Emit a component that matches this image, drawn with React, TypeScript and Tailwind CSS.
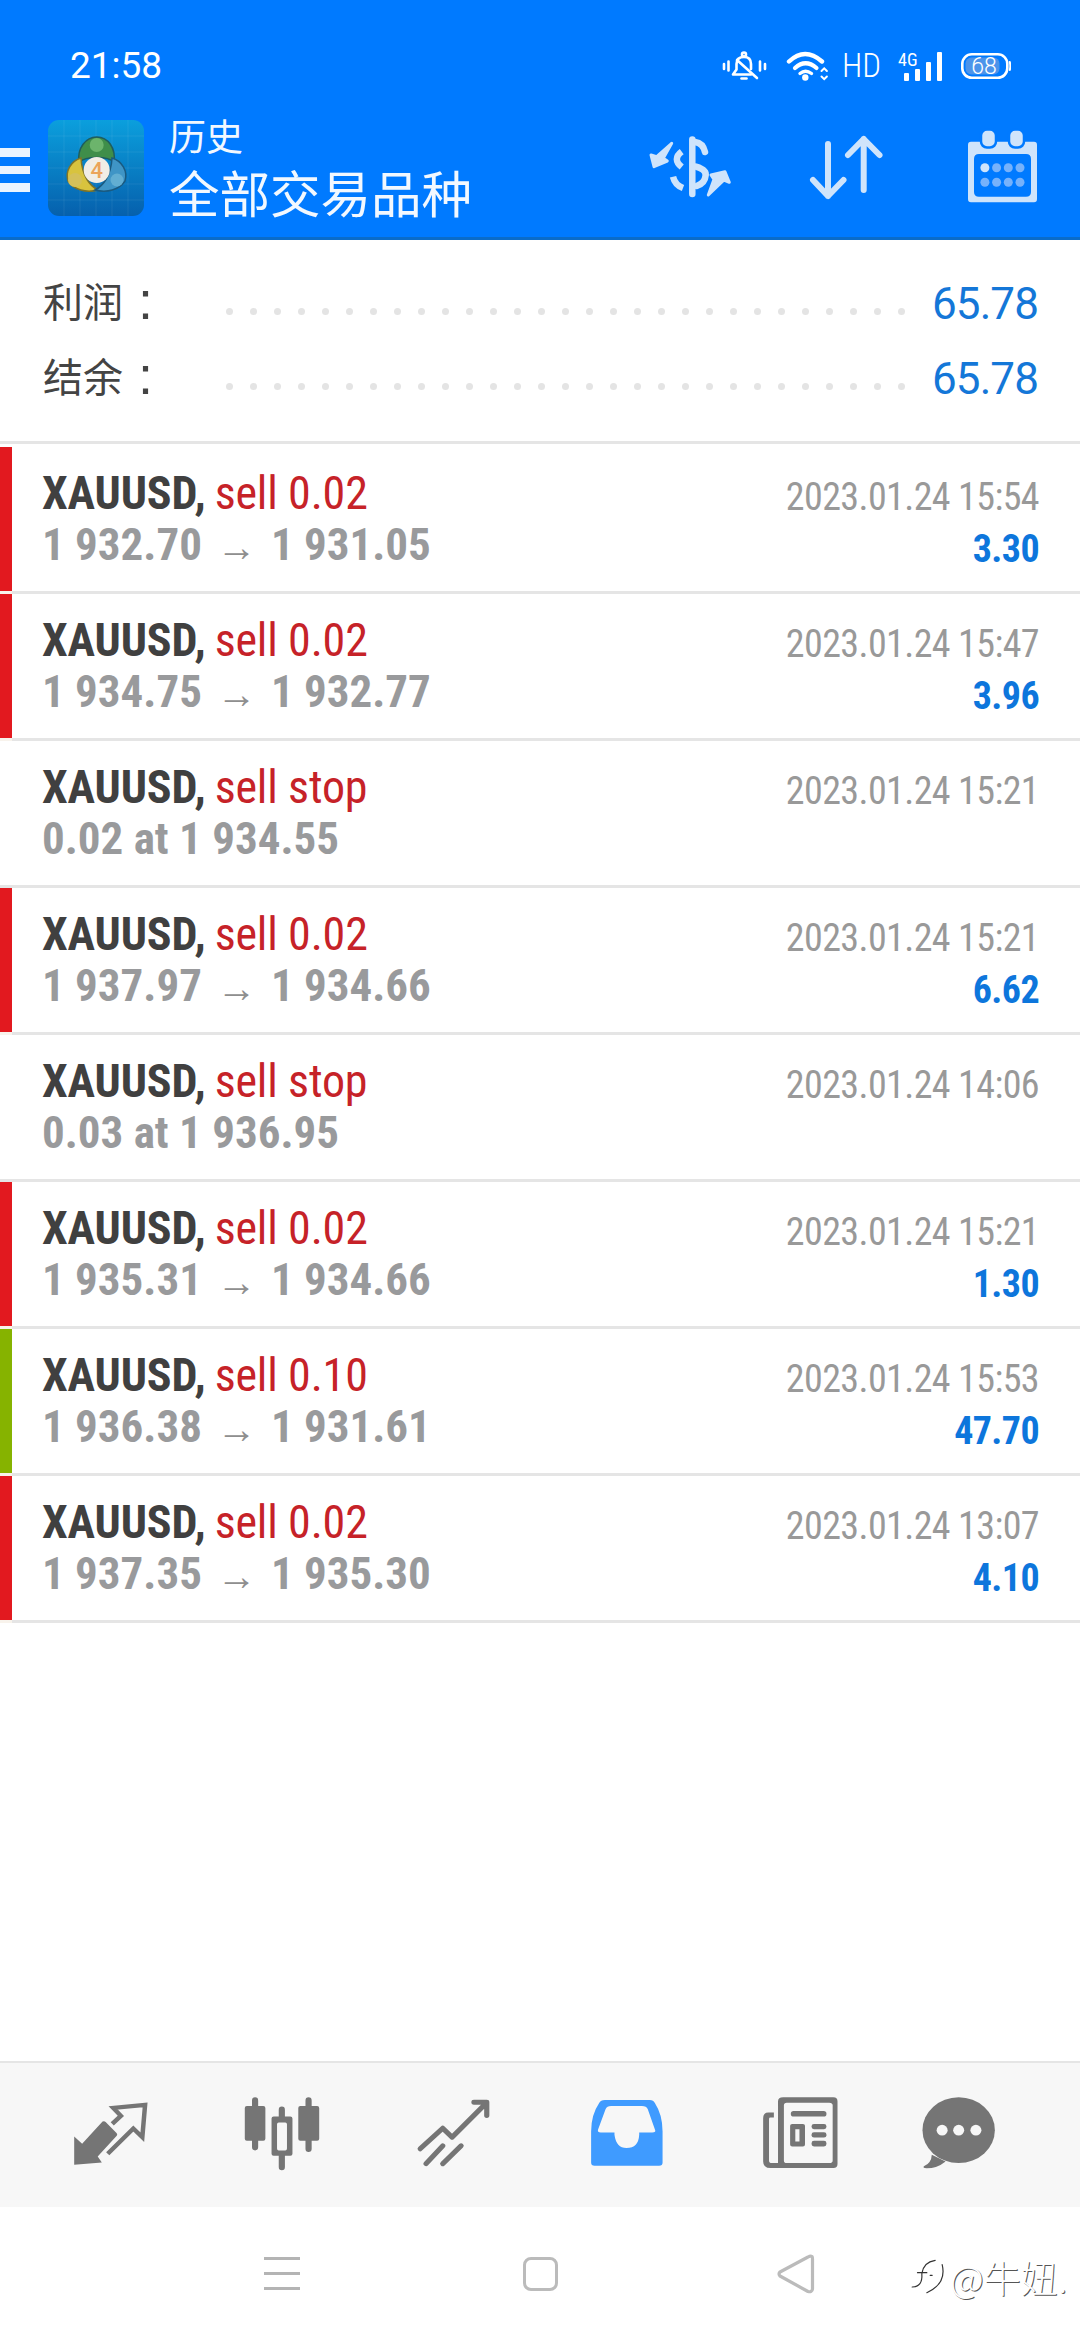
type Trade = {
  action: string;
  line2?: [string, string];
  at?: string;
  time: string;
  profit?: string;
  bar?: 'red' | 'green';
};

const TRADES: Trade[] = [
  { action: 'sell 0.02', line2: ['1 932.70', '1 931.05'], time: '2023.01.24 15:54', profit: '3.30', bar: 'red' },
  { action: 'sell 0.02', line2: ['1 934.75', '1 932.77'], time: '2023.01.24 15:47', profit: '3.96', bar: 'red' },
  { action: 'sell stop', at: '0.02 at 1 934.55', time: '2023.01.24 15:21' },
  { action: 'sell 0.02', line2: ['1 937.97', '1 934.66'], time: '2023.01.24 15:21', profit: '6.62', bar: 'red' },
  { action: 'sell stop', at: '0.03 at 1 936.95', time: '2023.01.24 14:06' },
  { action: 'sell 0.02', line2: ['1 935.31', '1 934.66'], time: '2023.01.24 15:21', profit: '1.30', bar: 'red' },
  { action: 'sell 0.10', line2: ['1 936.38', '1 931.61'], time: '2023.01.24 15:53', profit: '47.70', bar: 'green' },
  { action: 'sell 0.02', line2: ['1 937.35', '1 935.30'], time: '2023.01.24 13:07', profit: '4.10', bar: 'red' },
];

const DOTS = Array.from({ length: 29 }, (_, i) => i);

function StatusBar() {
  return (
    <div className="flex h-[112px] items-start pt-[48px] pl-[70px] pr-[69px] text-white">
      <span className="font-['Roboto',sans-serif] text-[37px] leading-[36px]">21:58</span>
      {/* 静音 */}
      <svg className="ml-auto h-[36px] w-[52px]" viewBox="0 0 52 36" fill="none" stroke="#fff" strokeWidth="2.6" strokeLinecap="round">
        <path d="M6 16v5M10.5 13.5v9M42 13.5v9M47 16v5" />
        <circle cx="26" cy="6.5" r="2" />
        <path d="M15 26.5H33M15 26.5l3.5-5V16Q18.5 9 26 9q7 0 7 7v5" strokeLinejoin="round" />
        <path d="M19 12 39 30" />
        <path d="M23.5 30.5h5" />
      </svg>
      {/* wifi */}
      <svg className="ml-[16px] h-[36px] w-[50px]" viewBox="0 0 50 36" fill="none" stroke="#fff" strokeLinecap="round">
        <path d="M3 13.5Q19-1.5 36 13.5" strokeWidth="4.4" />
        <path d="M9 20Q19.5 10.5 30.5 20" strokeWidth="4.2" />
        <path d="M14 25.5Q19.5 21 25.5 25.5" strokeWidth="3.4" />
        <circle cx="19.3" cy="29.5" r="3.2" fill="#fff" stroke="none" />
        <path d="M35.5 23l2.7-2.7 2.7 2.7M35.5 28.5l2.7 2.7 2.7-2.7" strokeWidth="2" />
      </svg>
      <span className="ml-[6px] font-['Roboto_Condensed',sans-serif] text-[33px] font-light leading-[36px]">HD</span>
      {/* 信号 */}
      <svg className="ml-[14px] h-[36px] w-[50px]" viewBox="0 0 50 36" fill="#fff">
        <text x="3" y="17.5" fontFamily="'Roboto Condensed',sans-serif" fontWeight="400" fontSize="18">4G</text>
        <rect x="9" y="25" width="5" height="8" rx="1" />
        <rect x="20" y="21" width="5" height="12" rx="1" />
        <rect x="31" y="14" width="5" height="19" rx="1" />
        <rect x="42" y="4" width="5" height="29" rx="1" />
      </svg>
      {/* 电量 */}
      <svg className="ml-[16px] h-[36px] w-[50px]" viewBox="0 0 50 36" fill="none">
        <rect x="1.3" y="6.3" width="45" height="23.5" rx="9.5" stroke="#fff" strokeWidth="2.6" />
        <rect x="4.5" y="9.5" width="34" height="17" rx="6" fill="#4d94ea" />
        <path d="M48.8 14q1 4 0 8" stroke="#fff" strokeWidth="2" strokeLinecap="round" />
        <text x="23" y="26" textAnchor="middle" fill="#fff" fontFamily="Roboto,sans-serif" fontWeight="300" fontSize="23">68</text>
      </svg>
    </div>
  );
}

function MtLogo() {
  return (
    <svg className="mt-[8px] ml-[18px] h-[96px] w-[96px] shrink-0" viewBox="0 0 96 96">
      <defs>
        <linearGradient id="logoBg" x1="0" y1="0" x2="0" y2="1">
          <stop offset="0" stopColor="#0b9fdd" />
          <stop offset="1" stopColor="#0660ad" />
        </linearGradient>
      </defs>
      <rect width="96" height="96" rx="11" fill="url(#logoBg)" />
      <path d="M16 0V96M32 0V96M48 0V96M64 0V96M80 0V96M0 16H96M0 32H96M0 48H96M0 64H96M0 80H96" stroke="#fff" strokeOpacity="0.07" strokeWidth="1" />
      <path d="M31 42C29 28 38 17 48.7 17C60 17 68 28 66 42C60 36 38 36 31 42Z" fill="#3f8e4a" stroke="#1f5d5e" strokeWidth="1.5" />
      <circle cx="48.7" cy="25" r="7" fill="#6cb46c" />
      <path d="M33 38C23 41 17 51 20 61C26 70 38 73 50 70C42 66 34 56 33 38Z" fill="#d8c33e" stroke="#7f7428" strokeWidth="1.5" />
      <circle cx="27" cy="60" r="7" fill="#d4c05a" />
      <path d="M64 38C74 41 80 51 77 61C71 70 59 73 47 70C55 66 63 56 64 38Z" fill="#3f95c6" stroke="#1a5a80" strokeWidth="1.5" />
      <circle cx="69" cy="60" r="6.5" fill="#62aed2" />
      <circle cx="48.7" cy="50" r="13" fill="#f1ede6" />
      <text x="48.7" y="58" textAnchor="middle" fill="#eba45a" fontFamily="Roboto,sans-serif" fontWeight="500" fontSize="22">4</text>
    </svg>
  );
}

function TitleBar() {
  return (
    <div className="flex flex-1 items-start pr-[40px]">
      <div className="mt-[36px] flex w-[30px] shrink-0 flex-col gap-[9px]">
        <div className="h-[9px] bg-[#eaf4ff]" />
        <div className="h-[8px] bg-[#eaf4ff]" />
        <div className="h-[9px] bg-[#eaf4ff]" />
      </div>
      <MtLogo />
      <div className="ml-[25px] font-['Noto_Sans_CJK_SC',sans-serif] text-[#f2f8ff]">
        <div className="mt-[3px] text-[37px] leading-[40px]">历史</div>
        <div className="mt-[8px] text-[50.5px] leading-[56px]">全部交易品种</div>
      </div>
      {/* 美元 */}
      <svg className="ml-auto mt-[20px] h-[70px] w-[90px] shrink-0" viewBox="0 0 90 70" fill="none" stroke="#cfe4fb" strokeWidth="6.5" strokeLinecap="round">
        <path d="M47.3 7.5V62" />
        <path d="M50 10Q58 11 60 20" />
        <path d="M36.7 19.7Q27 27 36.7 35" strokeLinecap="butt" />
        <path d="M51 34.7Q62 38 60.5 44Q60 51 51.7 54" />
        <path d="M28 44.7Q30 53 38 56" strokeLinecap="butt" />
        <path d="M6 23 11.7 24.7 26.7 11.3 18.3 26.3 22.3 29 9 34.7Z" fill="#cfe4fb" strokeWidth="3" strokeLinejoin="round" />
        <path d="M63.3 63 69 47.3 66 43 80 39.7 84.3 50.3 79 48Z" fill="#cfe4fb" strokeWidth="3" strokeLinejoin="round" />
      </svg>
      {/* 排序 */}
      <svg className="ml-[70px] mt-[18px] h-[75px] w-[80px] shrink-0" viewBox="0 0 80 75" fill="none" stroke="#cfe4fb" strokeWidth="6" strokeLinecap="round" strokeLinejoin="round">
        <path d="M23 14V66M8 50 23 66 38.5 50" />
        <path d="M58.7 9V60M43 25 58.7 9 74.5 25" />
      </svg>
      {/* 日历 */}
      <svg className="ml-[80px] mt-[16px] h-[80px] w-[75px] shrink-0" viewBox="0 0 75 80">
        <path fillRule="evenodd" fill="#cfe4fb" d="M6 13.7H69Q72 13.7 72 17V71Q72 74.3 69 74.3H6Q3 74.3 3 71V17Q3 13.7 6 13.7ZM14 26Q9 26 9 31V64Q9 68.7 14 68.7H61Q66 68.7 66 64V31Q66 26 61 26Z" />
        <rect x="16" y="1.5" width="15" height="18" rx="6" fill="#cfe4fb" stroke="#007aff" strokeWidth="2.5" />
        <rect x="44" y="1.5" width="15" height="18" rx="6" fill="#cfe4fb" stroke="#007aff" strokeWidth="2.5" />
        <circle cx="19.9" cy="39.7" r="4.5" fill="#cfe4fb" />
        <circle cx="31.6" cy="39.7" r="4.5" fill="#77b2fb" />
        <circle cx="43.3" cy="39.7" r="4.5" fill="#77b2fb" />
        <circle cx="55" cy="39.7" r="4.5" fill="#77b2fb" />
        <circle cx="19.9" cy="54.3" r="4.5" fill="#77b2fb" />
        <circle cx="31.6" cy="54.3" r="4.5" fill="#77b2fb" />
        <circle cx="43.3" cy="54.3" r="4.5" fill="#77b2fb" />
        <circle cx="55" cy="54.3" r="4.5" fill="#77b2fb" />
      </svg>
    </div>
  );
}

function SummaryRow({ label, value }: { label: string; value: string }) {
  return (
    <div className="flex h-[75px] items-center pl-[43px] pr-[42px]">
      <span className="-mt-[7px] flex w-[183px] shrink-0 items-center font-['Noto_Sans_CJK_SC',sans-serif] text-[40px] leading-[56px] text-[#444]">
        {label}
        <span className="ml-[15px] font-['Liberation_Sans',sans-serif] text-[54px] leading-[50px]">:</span>
      </span>
      <div className="mt-[16px] flex gap-[17px]">
        {DOTS.map((i) => (
          <div key={i} className="h-[7px] w-[7px] rounded-full bg-[#e4e4e4]" />
        ))}
      </div>
      <span className="ml-auto font-['Roboto',sans-serif] text-[44px] leading-[56px] tracking-[-0.9px] text-[#1477d8]">{value}</span>
    </div>
  );
}

function TradeRow({ t }: { t: Trade }) {
  const barColor = t.bar === 'red' ? 'bg-[#e2191f]' : t.bar === 'green' ? 'bg-[#86b300]' : 'bg-white';
  return (
    <div className="flex h-[147px] font-['Roboto_Condensed',Roboto,sans-serif]">
      <div className={t.bar ? 'w-[12px] shrink-0 border-b-[3px] border-[#f8f3ec]' : 'w-[12px] shrink-0 border-b-[3px] border-[#e5e5e5]'}>
        <div className={`h-full ${barColor}`} />
      </div>
      <div className="flex min-w-0 flex-1 justify-between border-b-[3px] border-[#e5e5e5] pl-[30px] pr-[41px]">
        <div className="pt-[20px] text-[46px] leading-[52px]">
          <div className="tracking-[-0.15px]">
            <span className="font-bold text-[#404040]">XAUUSD,</span>
            <span className="ml-[9px] text-[#c62228]">{t.action}</span>
          </div>
          <div className="flex text-[45px] font-bold text-[#999a9c]">
            {t.line2 ? (
              <>
                <span>{t.line2[0]}</span>
                <span className="w-[69px] text-center font-['Liberation_Sans',sans-serif] text-[40px] font-normal leading-[56px] text-[#8f8f8f]">→</span>
                <span>{t.line2[1]}</span>
              </>
            ) : (
              <span>{t.at}</span>
            )}
          </div>
        </div>
        <div className="pt-[24px] text-right text-[38px] leading-[52px] tracking-[-0.6px]">
          <div className="text-[#999]">{t.time}</div>
          {t.profit && <div className="font-bold text-[#0d76dc]">{t.profit}</div>}
        </div>
      </div>
    </div>
  );
}

function TabBar() {
  return (
    <div className="flex h-[146px] items-start border-t-2 border-[#e5e5e5] bg-[#f7f7f7] pl-[69px] pt-[32px]">
      {/* 行情 */}
      <svg className="h-[78px] w-[83px] shrink-0" viewBox="200 135 240 235" preserveAspectRatio="none" fill="#757575">
        <path d="M215 345V260L238 282 297 215Q302 212 306 216L338 250Q341 255 338 258L283 320 295 338Z" strokeLinejoin="round" />
        <path d="M325 222 350 198 328 174 420 165 412 262 386 236 312 312" fill="none" stroke="#757575" strokeWidth="13" />
      </svg>
      {/* K线 */}
      <svg className="ml-[88px] h-[78px] w-[84px] shrink-0" viewBox="695 135 245 235" preserveAspectRatio="none">
        <path fill="#757575" d="M739 142Q748 142 748 152V168H763Q769 168 769 174V267Q769 273 763 273H748V292Q748 302 739 302Q730 302 730 292V273H715Q709 273 709 267V174Q709 168 715 168H730V152Q730 142 739 142Z" />
        <path fill="#757575" d="M895 142Q904 142 904 152V168H920Q926 168 926 174V267Q926 273 920 273H904V297Q904 307 895 307Q886 307 886 297V273H871Q865 273 865 267V174Q865 168 871 168H886V152Q886 142 895 142Z" />
        <path fill="#757575" fillRule="evenodd" d="M817 170Q826 170 826 180V200H842Q848 200 848 206V312Q848 318 842 318H826V352Q826 362 817 362Q808 362 808 352V318H793Q787 318 787 312V206Q787 200 793 200H808V180Q808 170 817 170ZM808 218Q803 218 803 223V296Q803 302 808 302H827Q832 302 832 296V223Q832 218 827 218Z" />
      </svg>
      {/* 交易 */}
      <svg className="ml-[91px] h-[78px] w-[78px] shrink-0" viewBox="1205 135 225 235" preserveAspectRatio="none" fill="none" stroke="#757575" strokeWidth="15" strokeLinecap="round" strokeLinejoin="round">
        <path d="M1220 297 1285 235 1312 262 1410 160M1375 157H1412V197" />
        <path d="M1237 342 1285 288M1285 342 1338 288" />
      </svg>
      {/* 历史 */}
      <svg className="ml-[94px] h-[78px] w-[79px] shrink-0" viewBox="135 135 230 235" preserveAspectRatio="none">
        <path fill="#3f9bff" fillRule="evenodd" d="M187 150H318Q328 150 333 160Q355 195 355 245V338Q355 348 345 348H157Q147 348 147 338V245Q147 195 170 160Q175 150 187 150ZM205 168Q193 168 189 178L167 240Q165 248 175 248H215V255Q220 295 250 295Q285 295 287 255V248H325Q337 248 333 240L312 178Q308 168 295 168Z" />
      </svg>
      {/* 新闻 */}
      <svg className="ml-[93px] h-[78px] w-[83px] shrink-0" viewBox="635 135 240 235" preserveAspectRatio="none">
        <path fill="#757575" fillRule="evenodd" d="M705 142H850Q862 142 862 154V343Q862 355 850 355H668Q647 355 647 335V205Q647 188 662 188H678V203H668Q664 203 664 207V332Q664 340 672 340H690V154Q690 142 705 142ZM715 158Q707 158 707 166V332Q707 340 715 340H838Q848 340 848 332V166Q848 158 838 158Z" />
        <rect x="727" y="183" width="103" height="17" rx="8" fill="#757575" />
        <path fill="#757575" fillRule="evenodd" d="M731 222H762Q768 222 768 228V284Q768 290 762 290H731Q725 290 725 284V228Q725 222 731 222ZM740 238V275H752V238Z" />
        <rect x="787" y="222" width="43" height="16" rx="7" fill="#757575" />
        <rect x="787" y="247" width="43" height="16" rx="7" fill="#757575" />
        <rect x="787" y="273" width="43" height="17" rx="7" fill="#757575" />
      </svg>
      {/* 消息 */}
      <svg className="ml-[76px] h-[78px] w-[81px] shrink-0" viewBox="1095 135 235 235" preserveAspectRatio="none">
        <ellipse cx="1213" cy="241" rx="105" ry="99" fill="#757575" />
        <path d="M1135 315Q1134 340 1112 350Q1108 356 1120 356Q1150 356 1175 335Z" fill="#757575" />
        <circle cx="1165" cy="241" r="16" fill="#f7f7f7" />
        <circle cx="1213" cy="241" r="16" fill="#f7f7f7" />
        <circle cx="1263" cy="241" r="16" fill="#f7f7f7" />
      </svg>
    </div>
  );
}

function NavBar() {
  return (
    <div className="relative flex h-[133px] items-center bg-white pl-[264px]">
      <div className="flex w-[36px] flex-col gap-[12px]">
        <div className="h-[3px] bg-[#b4b4b4]" />
        <div className="h-[3px] bg-[#b4b4b4]" />
        <div className="h-[3px] bg-[#b4b4b4]" />
      </div>
      <div className="ml-[223px] h-[34px] w-[35px] rounded-[8px] border-[3px] border-[#bbb]" />
      <svg className="ml-[219px] h-[40px] w-[38px]" viewBox="0 0 38 40" fill="none" stroke="#bbb" strokeWidth="3.2" strokeLinejoin="round">
        <path d="M35 2.5Q33.5 1.5 31 3L3 18Q1 20 3 22L31 37.5Q35 38.5 35.5 35V5Q35.5 3 35 2.5Z" />
      </svg>
      {/* 水印 */}
      <div className="absolute left-[910px] top-[50px] flex items-center text-white">
        <svg className="h-[40px] w-[37px]" viewBox="1070 645 110 120" fill="none" stroke="#333" strokeWidth="3.5" strokeLinecap="round">
          <path d="M1145 655Q1110 660 1105 695Q1108 735 1076 735" />
          <path d="M1092 692H1120" />
          <path d="M1166 668Q1180 725 1120 752" />
          <path d="M1130 700h6" />
        </svg>
        <span className="ml-[3px] font-['Noto_Sans_CJK_SC',sans-serif] text-[37px] font-light leading-[40px] [text-shadow:1px_1px_0_#555]">@牛妞.</span>
      </div>
    </div>
  );
}

export default function App() {
  return (
    <div className="flex h-[2340px] w-[1080px] flex-col overflow-hidden bg-white">
      <header className="flex h-[240px] shrink-0 flex-col border-b-[3px] border-[#0a6cc9] bg-[#007aff]">
        <StatusBar />
        <TitleBar />
      </header>

      <section className="h-[201px] shrink-0 pt-[26px]">
        <SummaryRow label="利润" value="65.78" />
        <SummaryRow label="结余" value="65.78" />
      </section>
      <div className="h-[3px] shrink-0 bg-[#e5e5e5]" />

      <main className="flex-1 pt-[3px]">
        {TRADES.map((t, i) => (
          <TradeRow key={i} t={t} />
        ))}
      </main>

      <TabBar />
      <NavBar />
    </div>
  );
}
